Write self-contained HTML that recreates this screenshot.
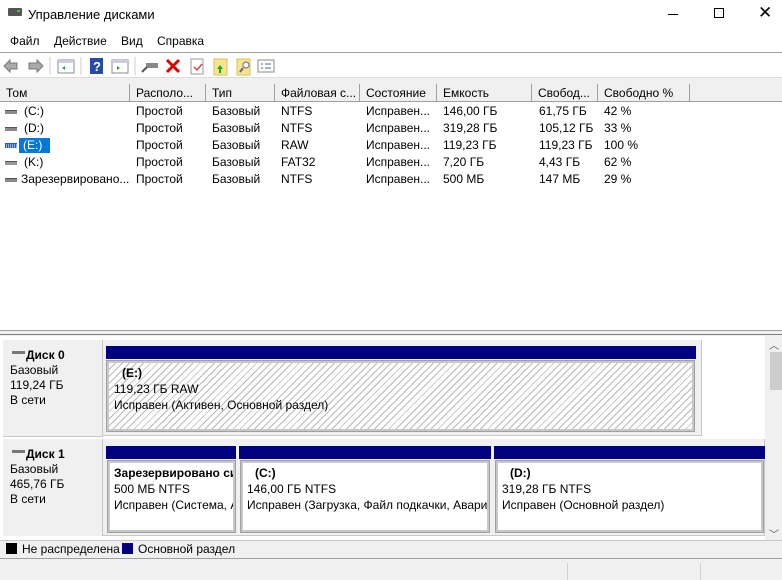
<!DOCTYPE html><html><head><meta charset="utf-8"><style>
*{margin:0;padding:0;box-sizing:border-box}
body{width:782px;height:580px;position:relative;background:#f0f0f0;font-family:"Liberation Sans","DejaVu Sans",sans-serif;font-size:12px;color:#000;overflow:hidden}
.a{position:absolute;white-space:nowrap}
.hd{position:absolute;top:84px;height:18px;background:#f0f0f0;border-right:1px solid #a0a0a0;border-bottom:1px solid #a0a0a0;padding:2px 0 0 6px}
.r{position:absolute;height:17px;line-height:17px}
.ic{position:absolute;left:5px;width:12px;height:4px;background:#8a8a8a;border-top:1px solid #555}
.blue{position:absolute;background:#000080}
.part{position:absolute;background:#fff;border:2px solid #c8c8c8;outline:1px solid #a0a0a0;padding:2px 0 0 4px;line-height:16px;overflow:hidden;white-space:nowrap}
.hatch{background:repeating-linear-gradient(135deg,#fff 0 4px,#b8b8b8 4px 5px)}
.lbl{position:absolute;left:3px;width:100px;background:#f0f0f0;border-right:1px solid #c8c8c8;padding:8px 0 0 7px;line-height:15px}
</style></head><body>
<div class="a" style="left:0;top:0;width:782px;height:77px;background:#fff"></div>
<div class="a" style="left:8px;top:8px;width:14px;height:8px;background:#555;border-radius:1px"></div>
<div class="a" style="left:17px;top:10px;width:3px;height:2px;background:#3c3"></div>
<div class="a" style="left:28px;top:7px;font-size:13px">Управление дисками</div>
<div class="a" style="left:668px;top:14px;width:10px;height:1px;background:#000"></div>
<div class="a" style="left:714px;top:8px;width:10px;height:10px;border:1px solid #000"></div>
<div class="a" style="left:758px;top:3px;font-size:17px;font-weight:100">✕</div>
<div class="a" style="left:10px;top:34px">Файл</div>
<div class="a" style="left:54px;top:34px">Действие</div>
<div class="a" style="left:121px;top:34px">Вид</div>
<div class="a" style="left:157px;top:34px">Справка</div>
<div class="a" style="left:0;top:52px;width:782px;height:1px;background:#a0a0a0"></div>
<svg class="a" style="left:0;top:55px" width="280" height="22">
<path d="M4 11 L10 5 V8 H17 V14 H10 V17Z" fill="#aaa" stroke="#777"/>
<path d="M43 11 L37 5 V8 H29 V14 H37 V17Z" fill="#aaa" stroke="#777"/>
<line x1="50" y1="2" x2="50" y2="20" stroke="#ccc"/>
<rect x="58" y="5" width="16" height="13" fill="#fff" stroke="#889"/><rect x="58" y="5" width="16" height="3" fill="#ccd"/><path d="M62 13 l3-2 v4z" fill="#2a2"/>
<line x1="81" y1="2" x2="81" y2="20" stroke="#ccc"/>
<rect x="90" y="3" width="13" height="16" fill="#2a4aa8"/><text x="93" y="16" fill="#fff" font-size="13" font-weight="bold">?</text>
<rect x="112" y="5" width="16" height="13" fill="#fff" stroke="#889"/><rect x="112" y="5" width="16" height="3" fill="#ccd"/><path d="M117 11 l3 2-3 2z" fill="#2a2"/>
<line x1="135" y1="2" x2="135" y2="20" stroke="#ccc"/>
<rect x="146" y="8" width="12" height="5" fill="#888"/><line x1="142" y1="17" x2="147" y2="12" stroke="#555" stroke-width="2"/>
<path d="M167 5 L179 17 M179 5 L167 17" stroke="#d00" stroke-width="3"/>
<rect x="191" y="4" width="12" height="15" fill="#fff" stroke="#999"/><path d="M194 12 l3 3 5-6" stroke="#d44" fill="none" stroke-width="1.5"/>
<rect x="214" y="4" width="13" height="16" fill="#f8e48a" stroke="#d8c060"/><path d="M220 10 l-3 4h2v4h2v-4h2z" fill="#2a2"/>
<rect x="237" y="4" width="13" height="16" fill="#f8e48a" stroke="#d8c060"/><circle cx="246" cy="10" r="3" fill="#fff" stroke="#668"/><line x1="243" y1="13" x2="240" y2="17" stroke="#668" stroke-width="2"/>
<rect x="258" y="5" width="16" height="12" fill="#fff" stroke="#888"/><path d="M261 9h2M261 13h2M265 9h6M265 13h6" stroke="#468"/>
</svg>
<div class="a" style="left:0;top:77px;width:782px;height:7px;background:#f0f0f0;border-top:1px solid #ddd"></div>
<div class="a" style="left:0;top:84px;width:782px;height:246px;background:#fff"></div>
<div class="hd" style="left:0;width:130px">Том</div>
<div class="hd" style="left:130px;width:76px">Располо...</div>
<div class="hd" style="left:206px;width:69px">Тип</div>
<div class="hd" style="left:275px;width:85px">Файловая с...</div>
<div class="hd" style="left:360px;width:77px">Состояние</div>
<div class="hd" style="left:437px;width:95px">Емкость</div>
<div class="hd" style="left:532px;width:66px">Свобод...</div>
<div class="hd" style="left:598px;width:92px">Свободно %</div>
<div class="hd" style="left:690px;width:92px;border-right:none"></div>

<div class="r" style="top:103px;left:0;width:782px">
<div class="ic" style="top:7px"></div><span class="a" style="left:24px">(C:)</span><span class="a" style="left:136px">Простой</span><span class="a" style="left:212px">Базовый</span><span class="a" style="left:281px">NTFS</span><span class="a" style="left:366px">Исправен...</span><span class="a" style="left:443px">146,00 ГБ</span><span class="a" style="left:539px">61,75 ГБ</span><span class="a" style="left:604px">42 %</span></div>
<div class="r" style="top:120px;left:0;width:782px">
<div class="ic" style="top:7px"></div><span class="a" style="left:24px">(D:)</span><span class="a" style="left:136px">Простой</span><span class="a" style="left:212px">Базовый</span><span class="a" style="left:281px">NTFS</span><span class="a" style="left:366px">Исправен...</span><span class="a" style="left:443px">319,28 ГБ</span><span class="a" style="left:539px">105,12 ГБ</span><span class="a" style="left:604px">33 %</span></div>
<div class="r" style="top:137px;left:0;width:782px">
<div class="ic" style="top:6px;background:repeating-linear-gradient(90deg,#1a5fd0 0 1px,#8ab4f0 1px 2px);border-top:1px solid #1a5fd0;height:5px"></div><span class="a" style="left:19px;top:1px;height:15px;line-height:15px;background:#0078d7;color:#fff;padding:0 8px 0 4px">(E:)</span><span class="a" style="left:136px">Простой</span><span class="a" style="left:212px">Базовый</span><span class="a" style="left:281px">RAW</span><span class="a" style="left:366px">Исправен...</span><span class="a" style="left:443px">119,23 ГБ</span><span class="a" style="left:539px">119,23 ГБ</span><span class="a" style="left:604px">100 %</span></div>
<div class="r" style="top:154px;left:0;width:782px">
<div class="ic" style="top:7px;background:#999"></div><span class="a" style="left:24px">(K:)</span><span class="a" style="left:136px">Простой</span><span class="a" style="left:212px">Базовый</span><span class="a" style="left:281px">FAT32</span><span class="a" style="left:366px">Исправен...</span><span class="a" style="left:443px">7,20 ГБ</span><span class="a" style="left:539px">4,43 ГБ</span><span class="a" style="left:604px">62 %</span></div>
<div class="r" style="top:171px;left:0;width:782px">
<div class="ic" style="top:7px"></div><span class="a" style="left:21px">Зарезервировано...</span><span class="a" style="left:136px">Простой</span><span class="a" style="left:212px">Базовый</span><span class="a" style="left:281px">NTFS</span><span class="a" style="left:366px">Исправен...</span><span class="a" style="left:443px">500 МБ</span><span class="a" style="left:539px">147 МБ</span><span class="a" style="left:604px">29 %</span></div>

<div class="a" style="left:0;top:330px;width:782px;height:5px;background:#f0f0f0;border-top:1px solid #a0a0a0;border-bottom:1px solid #808080"></div>
<div class="a" style="left:0;top:336px;width:765px;height:204px;background:#fff"></div>
<div class="lbl" style="top:340px;height:96px"><b style="padding-left:16px">Диск 0</b><br>Базовый<br>119,24 ГБ<br>В сети</div>
<div class="a" style="left:12px;top:351px;width:13px;height:3px;background:#777"></div>
<div class="a" style="left:3px;top:436px;width:100px;height:3px;background:#fff;border-top:1px solid #c8c8c8"></div>
<div class="lbl" style="top:439px;height:97px"><b style="padding-left:16px">Диск 1</b><br>Базовый<br>465,76 ГБ<br>В сети</div>
<div class="a" style="left:12px;top:450px;width:13px;height:3px;background:#777"></div>
<div class="a" style="left:103px;top:340px;width:599px;height:96px;background:#f0f0f0;border-right:1px solid #c8c8c8;border-bottom:1px solid #c8c8c8"></div>
<div class="blue" style="left:106px;top:346px;width:590px;height:13px"></div>
<div class="part hatch" style="left:107px;top:361px;width:587px;height:70px;padding-left:5px"><b style="padding-left:8px">(E:)</b><br>119,23 ГБ RAW<br>Исправен (Активен, Основной раздел)</div>
<div class="a" style="left:103px;top:439px;width:662px;height:97px;background:#f0f0f0;border-right:1px solid #c8c8c8;border-bottom:1px solid #c8c8c8"></div>
<div class="blue" style="left:106px;top:446px;width:130px;height:13px"></div>
<div class="blue" style="left:239px;top:446px;width:252px;height:13px"></div>
<div class="blue" style="left:494px;top:446px;width:271px;height:13px"></div>
<div class="part" style="left:108px;top:461px;width:127px;height:71px"><b>Зарезервировано системой</b><br>500 МБ NTFS<br>Исправен (Система, Активен)</div>
<div class="part" style="left:241px;top:461px;width:248px;height:71px"><b style="padding-left:8px">(C:)</b><br>146,00 ГБ NTFS<br>Исправен (Загрузка, Файл подкачки, Аварийный)</div>
<div class="part" style="left:496px;top:461px;width:267px;height:71px"><b style="padding-left:8px">(D:)</b><br>319,28 ГБ NTFS<br>Исправен (Основной раздел)</div>
<div class="a" style="left:765px;top:336px;width:17px;height:204px;background:#f0f0f0"></div>
<div class="a" style="left:769px;top:337px;font-size:10px;color:#555">︿</div>
<div class="a" style="left:769px;top:526px;font-size:10px;color:#555">﹀</div>
<div class="a" style="left:770px;top:352px;width:12px;height:38px;background:#cdcdcd"></div>
<div class="a" style="left:0;top:540px;width:782px;height:19px;background:#f0f0f0;border-top:1px solid #c8c8c8;border-bottom:1px solid #a0a0a0"></div>
<div class="a" style="left:6px;top:543px;width:11px;height:11px;background:#000"></div>
<div class="a" style="left:22px;top:542px">Не распределена</div>
<div class="a" style="left:122px;top:543px;width:11px;height:11px;background:#000080"></div>
<div class="a" style="left:138px;top:542px">Основной раздел</div>
<div class="a" style="left:567px;top:563px;width:1px;height:17px;background:#d0d0d0"></div>
<div class="a" style="left:700px;top:563px;width:1px;height:17px;background:#d0d0d0"></div>
</body></html>
